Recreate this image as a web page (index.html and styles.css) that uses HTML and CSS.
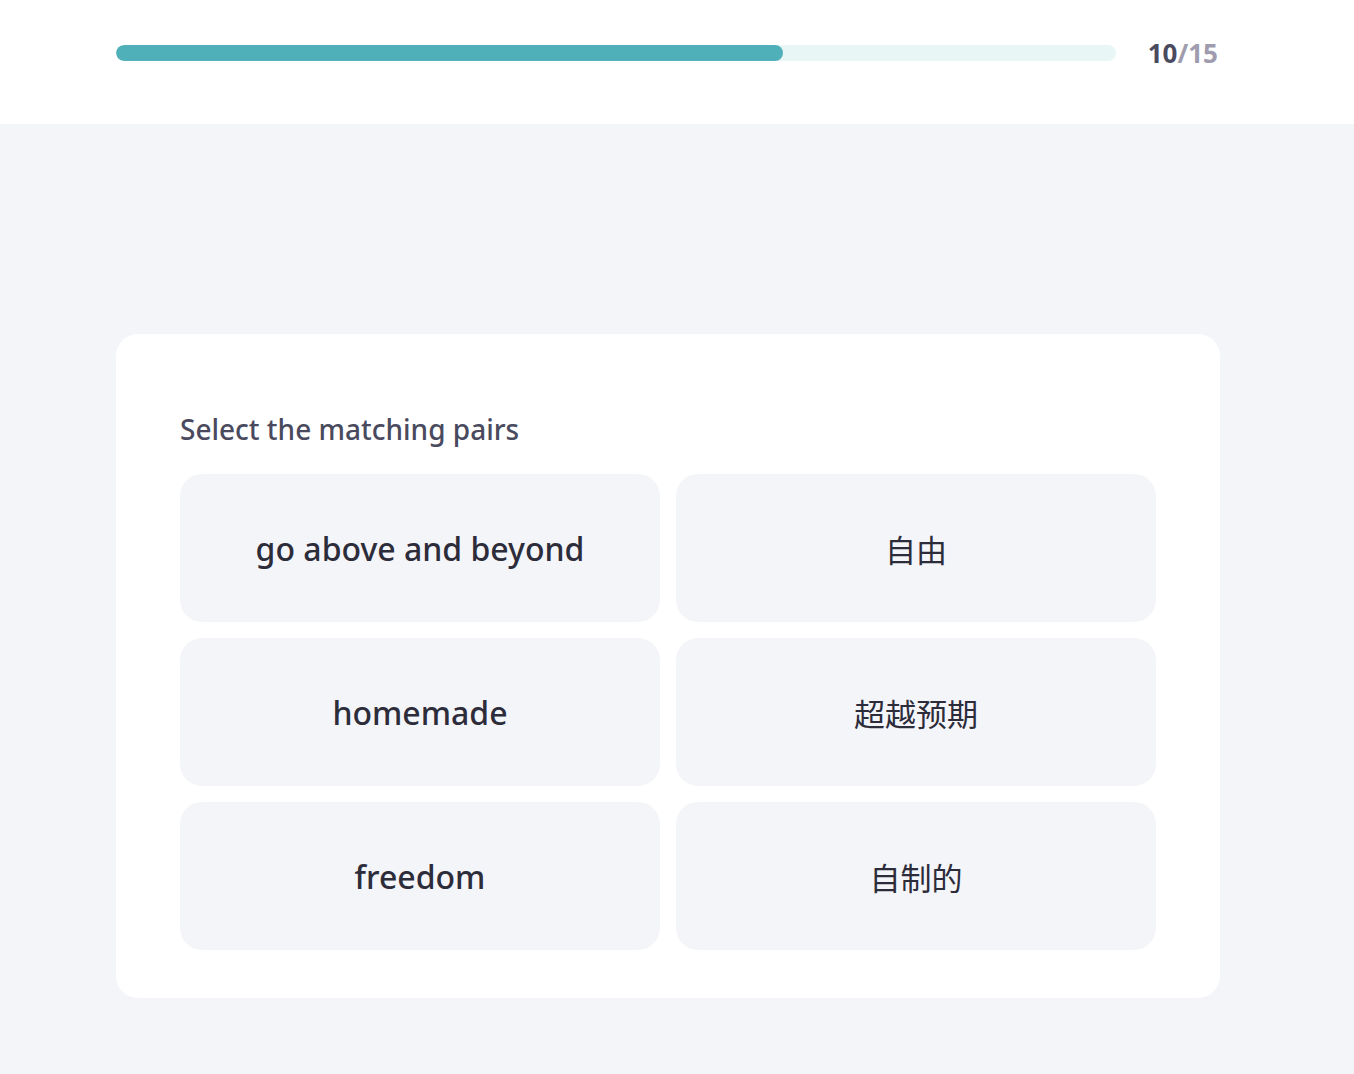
FILE: index.html
```html
<!DOCTYPE html>
<html lang="en">
<head>
<meta charset="utf-8">
<title>Match pairs</title>
<link rel="stylesheet" href="styles.css">
</head>
<body>
<header class="top">
  <div class="wrap top-inner">
    <div class="track"><div class="fill" style="width:66.7%"></div></div>
    <div class="count"><span class="cur">10</span><span class="tot">/15</span></div>
  </div>
</header>
<main class="stage">
  <div class="wrap">
    <section class="card">
      <h2 class="title">Select the matching pairs</h2>
      <div class="grid">
        <button class="tile">go above and beyond</button>
        <button class="tile tile-zh" lang="zh">自由</button>
        <button class="tile">homemade</button>
        <button class="tile tile-zh" lang="zh">超越预期</button>
        <button class="tile">freedom</button>
        <button class="tile tile-zh" lang="zh">自制的</button>
      </div>
    </section>
  </div>
</main>
</body>
</html>
```
FILE: styles.css
```css
* { box-sizing: border-box; }
html, body { margin: 0; padding: 0; }
body {
  font-family: "Noto Sans", "Noto Sans CJK SC", sans-serif;
  background: #f4f5f9;
  min-height: 1074px;
}
.wrap {
  width: 1104px;
  margin-left: 116px;
}
.top {
  background: #ffffff;
  height: 124px;
}
.top-inner {
  height: 106px;
  display: flex;
  align-items: center;
  gap: 32px;
}
.track {
  flex: 1;
  height: 16px;
  border-radius: 8px;
  background: #e8f6f6;
  overflow: hidden;
}
.fill {
  height: 100%;
  border-radius: 8px;
  background: #4fb0b9;
}
.count {
  font-size: 26px;
  font-weight: 700;
  line-height: 1;
  padding-right: 2px;
}
.cur { color: #4a4a5e; }
.tot { color: #9e9cae; }
.stage {
  padding-top: 210px;
}
.card {
  background: #ffffff;
  border-radius: 22px;
  padding: 77px 64px 48px;
}
.title {
  margin: 0 0 27px;
  font-size: 28px;
  line-height: 36px;
  font-weight: 500;
  color: #4a4a5e;
}
.grid {
  display: grid;
  grid-template-columns: 1fr 1fr;
  gap: 16px;
}
.tile {
  height: 148px;
  border: none;
  border-radius: 22px;
  background: #f4f5f9;
  font-family: "Noto Sans", "Noto Sans CJK SC", sans-serif;
  font-size: 32px;
  font-weight: 500;
  color: #2d2c3a;
  display: flex;
  align-items: center;
  justify-content: center;
  padding: 0;
}
.tile-zh {
  font-family: "Noto Sans CJK SC", "Noto Sans", sans-serif;
  font-size: 31px;
  font-weight: 400;
}
```
